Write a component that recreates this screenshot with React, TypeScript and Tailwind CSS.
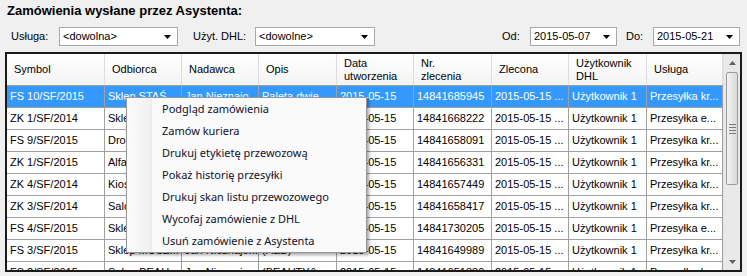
import React from "react";

const COLS = [98, 77, 77, 78, 77, 78, 77, 78, 76];

const HEADERS: string[][] = [
  ["Symbol"],
  ["Odbiorca"],
  ["Nadawca"],
  ["Opis"],
  ["Data", "utworzenia"],
  ["Nr.", "zlecenia"],
  ["Zlecona"],
  ["Użytkownik", "DHL"],
  ["Usługa"],
];

const ROWS: string[][] = [
  ["FS 10/SF/2015", "Sklep STAŚ", "Jan Nieznajo...", "Paleta dwie...", "2015-05-15", "14841685945", "2015-05-15 ...", "Użytkownik 1", "Przesyłka kr..."],
  ["ZK 1/SF/2014", "Sklep ABC ...", "Jan Nieznajo...", "(ABC)", "2015-05-15", "14841668222", "2015-05-15 ...", "Użytkownik 1", "Przesyłka e..."],
  ["FS 9/SF/2015", "Drogeria M...", "Jan Nieznajo...", "(DROG)", "2015-05-15", "14841658091", "2015-05-15 ...", "Użytkownik 1", "Przesyłka kr..."],
  ["ZK 1/SF/2015", "Alfa Sp. z o...", "Jan Nieznajo...", "(ALFA)", "2015-05-15", "14841656331", "2015-05-15 ...", "Użytkownik 1", "Przesyłka kr..."],
  ["ZK 4/SF/2014", "Kiosk RUCH", "Jan Nieznajo...", "(KIOSK)", "2015-05-15", "14841657449", "2015-05-15 ...", "Użytkownik 1", "Przesyłka kr..."],
  ["ZK 3/SF/2014", "Salon Mody ...", "Jan Nieznajo...", "(SALON)", "2015-05-15", "14841658417", "2015-05-15 ...", "Użytkownik 1", "Przesyłka kr..."],
  ["FS 4/SF/2015", "Sklep Zielo...", "Jan Nieznajo...", "(ZIEL)", "2015-05-15", "14841730205", "2015-05-15 ...", "Użytkownik 1", "Przesyłka e..."],
  ["FS 3/SF/2015", "Sklep MUSZ...", "Jan Nieznajo...", "(A&B)", "2015-05-15", "14841649989", "2015-05-15 ...", "Użytkownik 1", "Przesyłka kr..."],
  ["FS 2/SF/2015", "Salon BEAU...", "Jan Nieznajo...", "(BEAUTY&...", "2015-05-15", "14841651380", "2015-05-15 ...", "Użytkownik 1", "Przesyłka kr..."],
];

const MENU = [
  "Podgląd zamówienia",
  "Zamów kuriera",
  "Drukuj etykietę przewozową",
  "Pokaż historię przesyłki",
  "Drukuj skan listu przewozowego",
  "Wycofaj zamówienie z DHL",
  "Usuń zamówienie z Asystenta",
];

function Arrow() {
  return (
    <svg width="7" height="4" viewBox="0 0 7 4" className="shrink-0">
      <path d="M0 0h7L3.5 4z" fill="#000" />
    </svg>
  );
}

function Combo({ value, width }: { value: string; width: string }) {
  return (
    <div className={`${width} h-[19px] flex items-center bg-white border border-[#a9a9a9] pl-[3px] pr-[6px]`}>
      <span className="flex-1 truncate">{value}</span>
      <Arrow />
    </div>
  );
}

function Scrollbar() {
  return (
    <div className="w-[17px] flex flex-col bg-[#e9e9e9] border-l border-[#e3e3e3]">
      <div className="h-[17px] flex items-center justify-center">
        <svg width="7" height="4" viewBox="0 0 7 4">
          <path d="M0 4h7L3.5 0z" fill="#606060" />
        </svg>
      </div>
      <div className="mx-[2px] mt-[1px] h-[113px] rounded-[2px] border border-[#9b9b9b] bg-gradient-to-r from-[#f2f2f2] to-[#dadada] flex flex-col items-center justify-center gap-[2px]">
        <div className="w-[7px] h-px bg-[#7a7a7a]" />
        <div className="w-[7px] h-px bg-[#7a7a7a]" />
        <div className="w-[7px] h-px bg-[#7a7a7a]" />
        <div className="w-[7px] h-px bg-[#7a7a7a]" />
      </div>
      <div className="flex-1" />
      <div className="h-[17px] flex items-center justify-center">
        <svg width="7" height="4" viewBox="0 0 7 4">
          <path d="M0 0h7L3.5 4z" fill="#606060" />
        </svg>
      </div>
    </div>
  );
}

function ContextMenu() {
  return (
    <div className="absolute left-[126px] top-[97px] w-[241px] border border-[#979797] bg-[#fafafa] shadow-[2px_2px_3px_rgba(0,0,0,0.35)] flex font-['Noto_Sans',sans-serif] text-[11px] text-[#10102a]">
      <div className="w-[25px] bg-gradient-to-r from-[#fcfcfc] to-[#f0f0f0] border-r border-[#ececec]" />
      <div className="flex-1 flex flex-col">
        {MENU.map((item) => (
          <div key={item} className="h-[22px] flex items-center pl-[10px]">
            {item}
          </div>
        ))}
      </div>
    </div>
  );
}

export default function App() {
  return (
    <div className="relative w-[747px] h-[276px] overflow-hidden bg-[#f0f0f0] font-['Liberation_Sans',Arial,sans-serif] text-[11px] text-black">
      <div className="h-[27px] pt-[3px] pl-[7px] font-bold text-[13px] leading-[16px]">
        Zamówienia wysłane przez Asystenta:
      </div>

      <div className="h-[19px] flex items-center">
        <span className="w-[59px] pl-[11px]">Usługa:</span>
        <Combo value="<dowolna>" width="w-[119px]" />
        <span className="w-[77px] pl-[15px]">Użyt. DHL:</span>
        <Combo value="<dowolne>" width="w-[120px]" />
        <span className="ml-[127px] w-[28px]">Od:</span>
        <Combo value="2015-05-07" width="w-[87px]" />
        <span className="ml-[9px] w-[27px]">Do:</span>
        <Combo value="2015-05-21" width="w-[87px]" />
      </div>

      <div className="mt-[6px] ml-[5px] w-[737px] h-[220px] border-2 border-[#1a1a1a] bg-white flex">
        <div className="w-[716px] flex flex-col overflow-hidden">
          <div className="h-[32px] shrink-0 flex border-b border-[#a0a0a0] bg-gradient-to-b from-white to-[#f4f4f4]">
            {HEADERS.map((h, i) => (
              <div
                key={i}
                style={{ width: COLS[i] }}
                className="shrink-0 flex flex-col justify-center pl-[7px] leading-[13px] border-r border-[#dcdcdc]"
              >
                {h.map((line) => (
                  <span key={line}>{line}</span>
                ))}
              </div>
            ))}
          </div>
          {ROWS.map((row, r) => (
            <div
              key={r}
              className={`h-[22px] shrink-0 flex border-b border-[#a0a0a0] ${r === 0 ? "bg-[#3399ff] text-white" : ""}`}
            >
              {row.map((cell, i) => (
                <div
                  key={i}
                  style={{ width: COLS[i] }}
                  className="shrink-0 flex items-center pl-[3px] whitespace-nowrap overflow-hidden border-r border-[#a0a0a0]"
                >
                  {cell}
                </div>
              ))}
            </div>
          ))}
        </div>
        <Scrollbar />
      </div>

      <ContextMenu />
    </div>
  );
}
